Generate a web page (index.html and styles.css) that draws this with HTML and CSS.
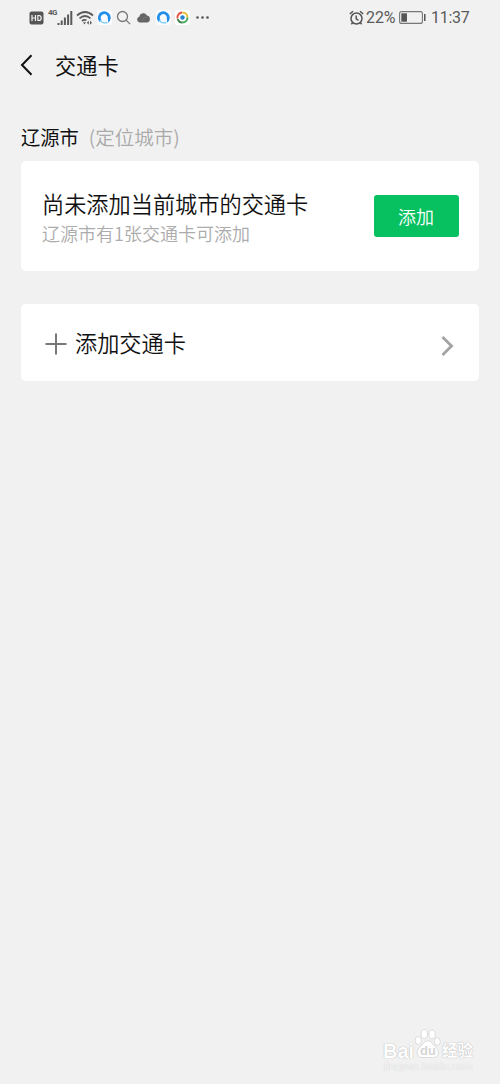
FILE: index.html
```html
<!DOCTYPE html>
<html lang="zh-CN">
<head>
<meta charset="utf-8">
<title>交通卡</title>
<link rel="stylesheet" href="styles.css">
</head>
<body>
<header class="status">
  <div class="status-icons">
    <svg class="hd" width="15" height="14" viewBox="0 0 15 14"><rect x=".5" y=".5" width="14" height="13" rx="2" fill="#555"/><path d="M3 4v6M6.500 4v6M3 7h3.500M8.900 4.500v5h1q2.300 0 2.300-2.500t-2.300-2.500z" fill="none" stroke="#f2f2f2" stroke-width="1.200"/></svg>
    <span class="net">4G</span>
    <svg class="signal" width="16" height="16" viewBox="0 0 16 16" fill="#5a5a5a"><path d="M.5 13h2v2h-2zM3.700 10.500h2V15h-2zM6.900 7.500h2V15h-2zM10.100 4.500h2V15h-2zM13.300 1h2v14h-2z"/></svg>
    <svg class="wifi" width="18" height="16" viewBox="0 0 18 16" fill="none" stroke="#5a5a5a" stroke-width="1.700"><path d="M1 5.500q8-7 16 0M3.500 8.300q5.500-4.600 11 0M6 11q2-1.800 4.500-.8"/><path d="M7 12.300h3L8.500 14.500zM12.800 10.800l-2 2 2 2zM14 10.800l2 2-2 2z" fill="#5a5a5a" stroke="none"/></svg>
    <svg class="browser" width="15" height="15" viewBox="0 0 15 15"><rect width="15" height="15" rx="3" fill="#fafcff"/><path d="M3.500 11A5 5 0 1 1 12.200 8.500" fill="none" stroke="#248fe8" stroke-width="2.800"/><path d="M3 10Q5.500 14 10.500 12.500" fill="none" stroke="#7bcbf7" stroke-width="1.400"/><path d="M10.800 8h2.800q0 2.800-2.400 4.500z" fill="#248fe8"/></svg>
    <svg class="search" width="15" height="15" viewBox="0 0 15 15" fill="none" stroke="#777" stroke-width="1.300"><circle cx="6.500" cy="6.500" r="5"/><path d="M10.100 10.100l4 4"/></svg>
    <svg class="cloud" width="15" height="11" viewBox="0 0 15 11"><path d="M3.500 10.500A3 3 0 0 1 3.200 4.700 4.200 4.200 0 0 1 11 3.500a3.600 3.600 0 0 1 .3 7z" fill="#666"/><path d="M6 8.500Q7.500 5 11 5" fill="none" stroke="#858585" stroke-width=".6"/></svg>
    <svg class="browser2" width="15" height="15" viewBox="0 0 15 15"><rect width="15" height="15" rx="3" fill="#fafcff"/><path d="M3.500 11A5 5 0 1 1 12.200 8.500" fill="none" stroke="#248fe8" stroke-width="2.800"/><path d="M3 10Q5.500 14 10.500 12.500" fill="none" stroke="#7bcbf7" stroke-width="1.400"/><path d="M10.800 8h2.800q0 2.800-2.400 4.500z" fill="#248fe8"/></svg>
    <svg class="color-app" width="15" height="15" viewBox="0 0 15 15"><rect width="15" height="15" rx="3" fill="#fff"/><g fill="none" stroke-width="1.900"><path d="M2.500 8.500A5 5 0 0 1 7.200 2.500" stroke="#e5523f"/><path d="M7.500 2.500a5 5 0 0 1 5 5" stroke="#e9bd25"/><path d="M12.500 7.500a5 5 0 0 1-5 5" stroke="#43a85a"/><path d="M7.500 12.500A5 5 0 0 1 2.700 9" stroke="#397f45"/></g><circle cx="7.500" cy="7.500" r="2.200" fill="#2685cb"/></svg>
    <svg class="dots" width="13" height="3" viewBox="0 0 13 3" fill="#555"><circle cx="1.500" cy="1.500" r="1.300"/><circle cx="6.500" cy="1.500" r="1.300"/><circle cx="11.500" cy="1.500" r="1.300"/></svg>
  </div>
  <div class="status-right">
    <svg width="15" height="16" viewBox="0 0 15 16" fill="none" stroke="#555" stroke-width="1.500"><circle cx="7.500" cy="8.500" r="5.500"/><path d="M.8 4L4 1.200M11 1.200L14.200 4M7.200 5.500v3.300l2.300 1.600M3.700 12.700l-1.400 1.600M11.300 12.700l1.400 1.600"/></svg>
    <span class="percent">22%</span>
    <svg class="battery" width="27" height="13" viewBox="0 0 27 13"><rect x=".6" y=".6" width="22.800" height="11.800" rx="2" fill="none" stroke="#777" stroke-width="1.100"/><path d="M2.300 2.300h5.700v8.400H2.300z" fill="#555"/><path d="M25 3h1.500v7H25z" fill="#555"/></svg>
    <span class="time">11:37</span>
  </div>
</header>
<nav class="nav">
  <svg width="13" height="22" viewBox="0 0 13 22" fill="none" stroke="#111" stroke-width="2"><path d="M11.500 1.200L2 11l9.500 9.800"/></svg>
  <h1 class="title">交通卡</h1>
</nav>
<main class="content">
  <div class="city"><span class="city-name">辽源市</span><span class="city-note">(定位城市)</span></div>
  <section class="card current">
    <div class="info">
      <h2 class="card-title">尚未添加当前城市的交通卡</h2>
      <p class="card-note">辽源市有1张交通卡可添加</p>
    </div>
    <button class="add-button" type="button">添加</button>
  </section>
  <section class="card add-row">
    <svg class="plus" width="22" height="22" viewBox="0 0 22 22" stroke="#777" stroke-width="2"><path d="M11 .5v21M.5 11h21"/></svg>
    <span class="add-label">添加交通卡</span>
    <svg class="arrow" width="13" height="20" viewBox="0 0 13 20" fill="none" stroke="#a3a3a3" stroke-width="2.800"><path d="M1.500 1L10.500 10l-9 9"/></svg>
  </section>
</main>
<footer class="watermark">
  <div class="mark"><span class="bai">Bai</span>
    <svg class="paw" width="28" height="31" viewBox="0 0 28 31" fill="#fff" stroke="#d4d4d4" stroke-width=".8"><ellipse cx="4.200" cy="12.500" rx="3.100" ry="4"/><ellipse cx="10.300" cy="6" rx="3.200" ry="4.500"/><ellipse cx="18" cy="6.500" rx="3.100" ry="4.400"/><ellipse cx="23.300" cy="13.500" rx="3" ry="3.800"/><path d="M14 12.500Q17 12.500 19.500 17Q25 21 24.500 25Q23.500 30 18.500 29.500H9Q4 30 3 25Q2.500 21 8 17Q10.500 12.500 14 12.500z"/><text class="du" x="6" y="27">du</text></svg>
    <span class="jingyan">经验</span></div>
  <div class="site">jingyan.baidu.com</div>
</footer>
</body>
</html>
```
FILE: styles.css
```css
* { box-sizing: border-box; }
body {
  margin: 0;
  min-height: 1084px;
  position: relative;
  background: #f1f1f1;
  color: #111;
  font-family: "Noto Sans CJK SC", sans-serif;
}
svg { display: block; flex: none; }
.status {
  height: 35px;
  padding: 0 30px 0 29px;
  display: flex;
  align-items: center;
  justify-content: space-between;
  color: #5a5a5a;
  font: 16px/20px Roboto, sans-serif;
}
.status-icons, .status-right { display: flex; align-items: center; }
.net { margin: -9px 0 0 4px; width: 9px; font-size: 8px; line-height: 10px; font-weight: 700; letter-spacing: -.5px; }
.wifi { margin-left: 3px; }
.browser { margin-left: 3px; }
.search { margin-left: 4px; }
.cloud { margin-left: 5px; }
.browser2 { margin-left: 5px; }
.color-app { margin-left: 4px; }
.dots { margin-left: 6px; }
.percent { margin-left: 2px; width: 33px; white-space: nowrap; letter-spacing: -.1px; }
.time { margin-left: 5px; width: 39px; white-space: nowrap; letter-spacing: -.3px; }
.nav { height: 59px; padding-left: 20px; display: flex; align-items: center; gap: 22px; }
.title { margin: 0; font-size: 21.200px; line-height: 30px; font-weight: 400; }
.content { padding: 28px 21px 0; }
.city { height: 39px; display: flex; font-size: 19.300px; line-height: 30px; }
.city-note { margin-left: 10px; color: #aaa; font-size: 19.500px; font-weight: 350; }
.card { background: #fff; border-radius: 5px; display: flex; align-items: center; }
.current { height: 110px; padding: 0 20px 0 21px; justify-content: space-between; }
.card-title { margin: 0; font-size: 22.200px; line-height: 32px; font-weight: 350; }
.card-note { margin: 0; font-size: 18px; line-height: 28px; color: #acacac; font-weight: 350; }
.info { padding-top: 1px; }
.add-button {
  width: 85px;
  height: 42px;
  padding: 0 1px 0 0;
  border: 0;
  border-radius: 3px;
  background: #07c160;
  color: #fff;
  font: 350 18px/42px "Noto Sans CJK SC", sans-serif;
}
.add-row { height: 77px; margin-top: 33px; padding: 3px 25px 0 24px; }
.add-label { margin: -4px 0 0 8px; font-size: 22.200px; line-height: 32px; font-weight: 350; }
.arrow { margin: 3px 0 0 auto; }
.watermark {
  position: absolute;
  left: 383px;
  top: 1028px;
  color: #fff;
  font-family: "Liberation Sans", "Noto Sans CJK SC", sans-serif;
  text-shadow: 0 0 1px #aaa, 0 0 1px #ccc;
}
.mark { display: flex; align-items: flex-end; height: 31px; }
.bai { width: 31px; font-size: 20px; line-height: 16px; font-weight: 700; }
.du { font: 700 13px "Liberation Sans", sans-serif; fill: #d6d6d6; stroke: none; text-shadow: none; }
.jingyan { font-size: 15.500px; line-height: 16px; font-weight: 700; white-space: nowrap; }
.site { margin: 1px 0 0 1px; font-size: 11px; line-height: 12px; color: #f5f5f5; text-shadow: 0 0 1px #c8c8c8; }
```
